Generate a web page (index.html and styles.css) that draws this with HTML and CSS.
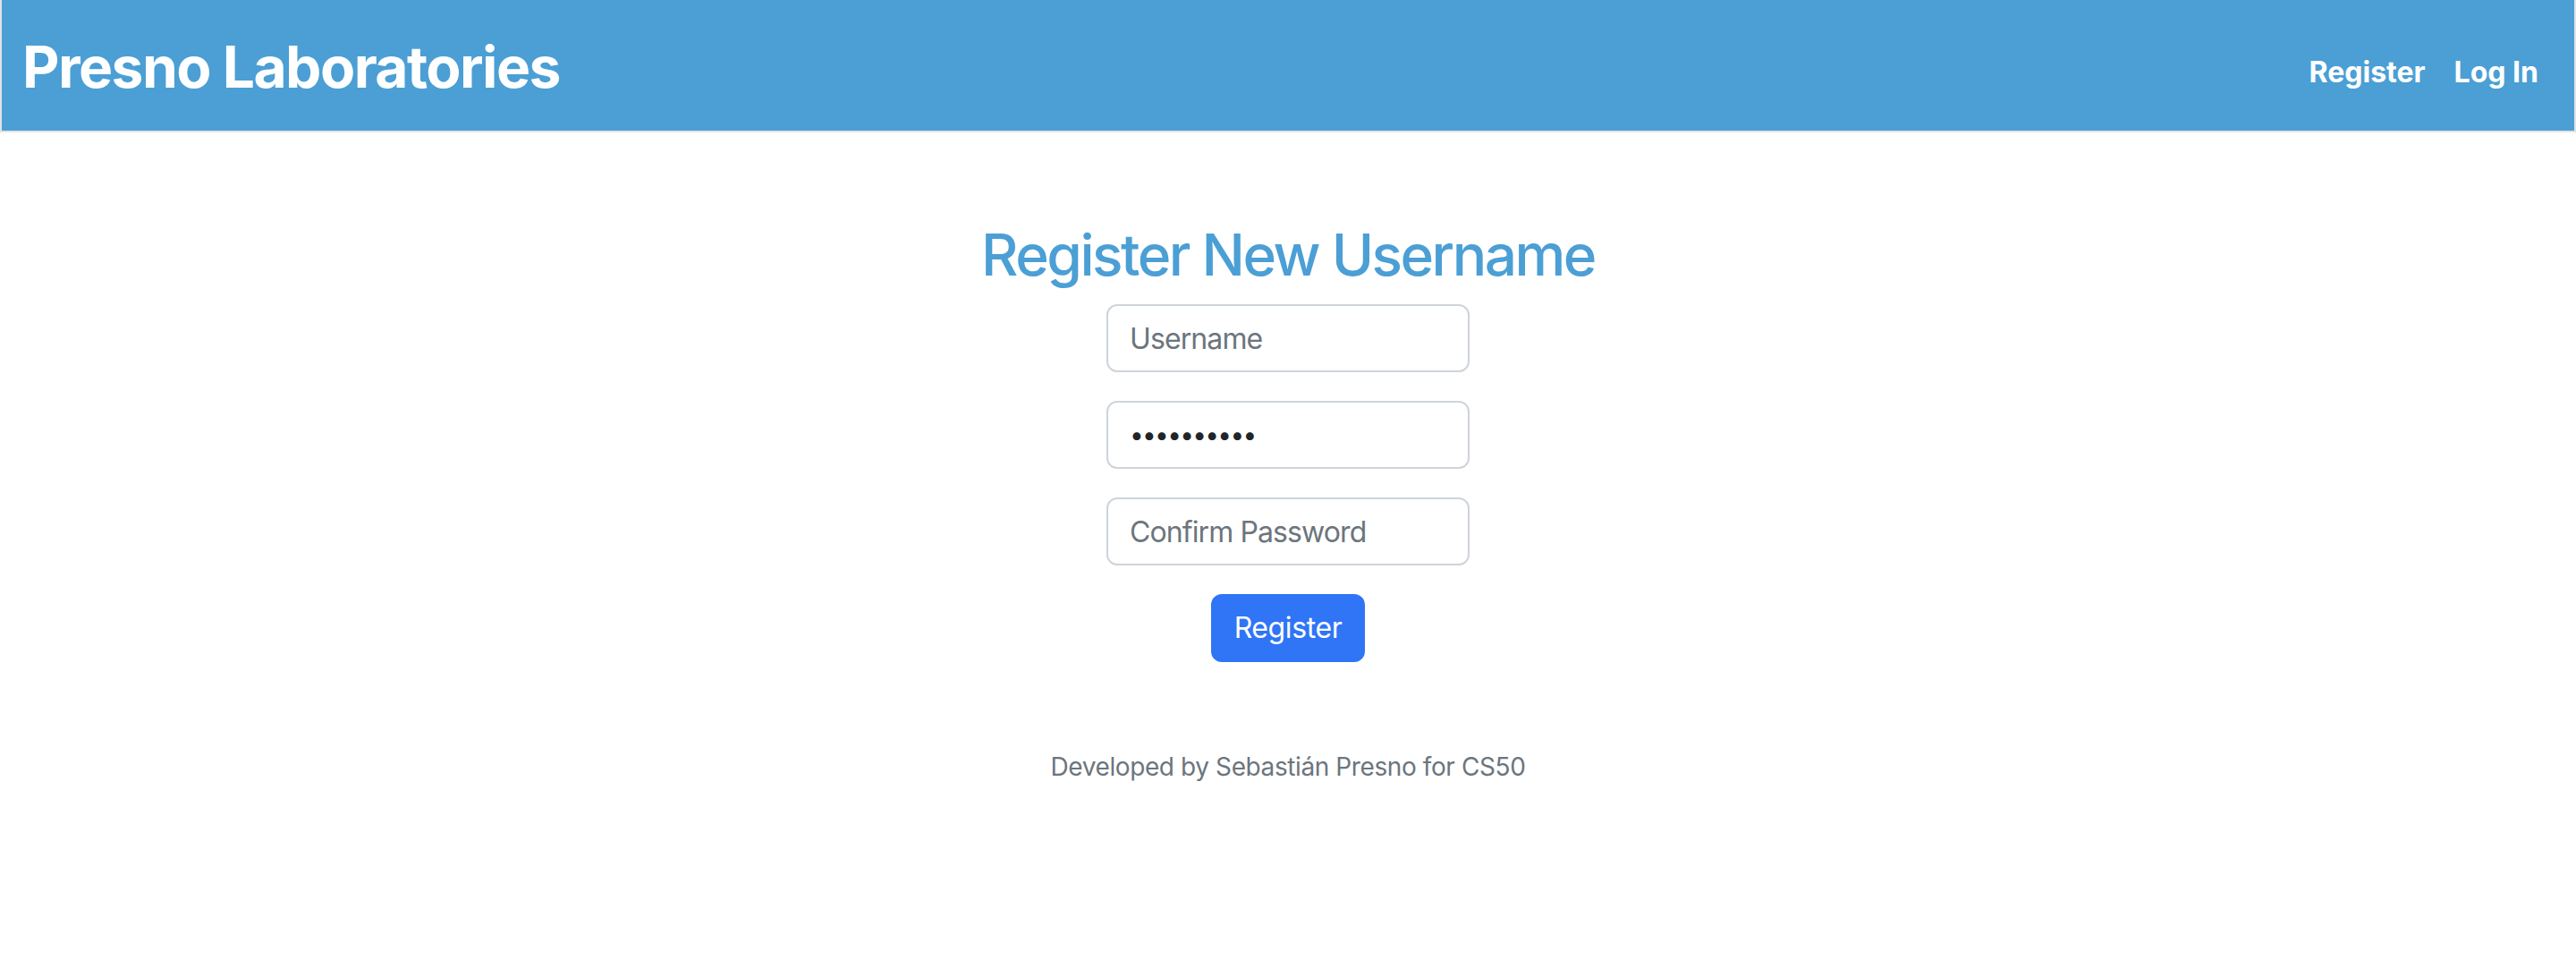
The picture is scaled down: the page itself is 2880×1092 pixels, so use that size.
FILE: index.html
```html
<!DOCTYPE html>
<html lang="en">
<head>
<meta charset="utf-8">
<title>Presno Laboratories: Register</title>
<link rel="stylesheet" href="styles.css">
</head>
<body>
<nav class="navbar">
  <a class="brand" href="#">Presno Laboratories</a>
  <ul class="nav-links">
    <li><a class="nav-link" href="#">Register</a></li>
    <li><a class="nav-link" href="#">Log In</a></li>
  </ul>
</nav>
<main class="main">
  <h2 class="title">Register New Username</h2>
  <form class="form">
    <div class="group"><input class="control" type="text" placeholder="Username"></div>
    <div class="group"><input class="control control-secret" type="password" value="abcdefghij" placeholder="Password"></div>
    <div class="group"><input class="control" type="password" placeholder="Confirm Password"></div>
    <button class="btn" type="button">Register</button>
  </form>
</main>
<footer class="footer">Developed by Sebastián Presno for CS50</footer>
</body>
</html>
```
FILE: styles.css
```css
html, body {
  margin: 0;
  padding: 0;
  background: #ffffff;
}
body {
  font-family: Inter, "Noto Sans", "Liberation Sans", sans-serif;
  color: #212529;
}
.navbar {
  display: flex;
  align-items: center;
  justify-content: space-between;
  padding: 4px 24px 0 23px;
  box-sizing: border-box;
  height: 148px;
  background: #4b9fd5;
  border: 2px solid #e3e3e3;
  border-top: none;
}
.brand {
  color: #ffffff;
  text-decoration: none;
  font-size: 64px;
  font-weight: 700;
  line-height: 64px;
  letter-spacing: -1.5px;
}
.nav-links {
  display: flex;
  list-style: none;
  margin: 0;
  padding: 12px 0 0 0;
}
.nav-link {
  display: block;
  padding: 0 16px;
  color: #ffffff;
  font-weight: 700;
  font-size: 32px;
  line-height: 48px;
  text-decoration: none;
}
.main {
  display: flex;
  flex-direction: column;
  align-items: center;
  padding-top: 98px;
}
.title {
  margin: 0 0 17px 0;
  font-size: 64px;
  font-weight: 500;
  line-height: 77px;
  letter-spacing: -2.5px;
  color: #4b9fd5;
}
.form {
  display: flex;
  flex-direction: column;
  align-items: center;
}
.group {
  margin-bottom: 32px;
}
.control {
  display: block;
  box-sizing: border-box;
  width: 406px;
  height: 76px;
  padding: 12px 24px;
  font-family: inherit;
  font-size: 32px;
  line-height: 48px;
  letter-spacing: -0.9px;
  color: #212529;
  background: #ffffff;
  border: 2px solid #ced4da;
  border-radius: 12px;
  outline: none;
}
.control-secret {
  letter-spacing: -1.7px;
  font-size: 28px;
}
.control::placeholder {
  color: #6c757d;
}
.btn {
  box-sizing: border-box;
  height: 76px;
  padding: 12px 24px;
  font-family: inherit;
  font-size: 32px;
  line-height: 48px;
  letter-spacing: -0.4px;
  color: #ffffff;
  background: #2f75f6;
  border: 2px solid #2f75f6;
  border-radius: 12px;
}
.footer {
  margin-top: 96px;
  text-align: center;
  font-size: 28px;
  line-height: 42px;
  letter-spacing: -0.4px;
  color: #6c757d;
}
```
